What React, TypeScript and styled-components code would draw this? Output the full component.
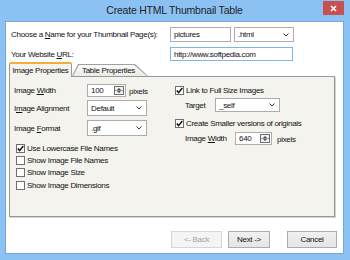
import React from "react";
import styled, { createGlobalStyle } from "styled-components";

const Global = createGlobalStyle`
  html, body { margin: 0; padding: 0; width: 350px; height: 260px; overflow: hidden; }
  body { font-family: "Liberation Sans", Arial, sans-serif; font-size: 8px; letter-spacing: -0.3px; color: #111; }
  * { box-sizing: border-box; }
`;

const Window = styled.div`
  width: 350px;
  height: 260px;
  background: #8bc1f3;
  display: grid;
  grid-template-rows: 21px 1fr;
  padding: 0 6px 6px 5px;
`;

const TitleBar = styled.div`
  display: grid;
  grid-template-columns: 1fr auto 1fr;
  align-items: center;
`;

const Title = styled.div`
  grid-column: 2;
  font-size: 10.5px;
  letter-spacing: -0.22px;
  color: #1f1f1f;
  line-height: 21px;
`;

const CloseButton = styled.div`
  grid-column: 3;
  justify-self: end;
  align-self: start;
  width: 21px;
  height: 14px;
  margin-top: 1px;
  background: #c75050;
  display: flex;
  align-items: center;
  justify-content: center;
`;

const Client = styled.div`
  background: #ffffff;
  border: 1px solid #74a8dc;
  display: flex;
  flex-direction: column;
  padding: 5px 8px 0 3px;
`;

const TopRow = styled.div<{ $h: number; $mt: number }>`
  display: flex;
  align-items: center;
  height: ${(p) => p.$h}px;
  margin-top: ${(p) => p.$mt}px;
  padding-left: 2px;
`;

const TopLabel = styled.div`
  width: 159px;
  flex: none;
`;

const TextInput = styled.div<{ $w: number; $focus?: boolean }>`
  width: ${(p) => p.$w}px;
  height: 100%;
  border: 1px solid ${(p) => (p.$focus ? "#7eb4ea" : "#abadb3")};
  background: #fff;
  display: flex;
  align-items: center;
  padding-left: 3px;
  flex: none;
`;

const SelectBox = styled.div<{ $w: number; $h?: number; $ml?: number }>`
  width: ${(p) => p.$w}px;
  height: ${(p) => (p.$h ? `${p.$h}px` : "100%")};
  margin-left: ${(p) => p.$ml ?? 0}px;
  border: 1px solid #acacac;
  background: #fff;
  display: flex;
  align-items: center;
  justify-content: space-between;
  padding: 0 4px 0 3px;
  flex: none;
`;

const TabStrip = styled.div`
  display: flex;
  align-items: flex-end;
  height: 14px;
  margin-top: 1px;
`;

const ActiveTab = styled.div`
  position: relative;
  z-index: 1;
  width: 63px;
  height: 15px;
  margin-bottom: -1px;
  background: #f4f3ee;
  border: 1px solid #919b9c;
  border-bottom: none;
  border-top: 2px solid #f0ae3c;
  border-radius: 2px 2px 0 0;
  display: flex;
  align-items: center;
  justify-content: center;
  padding-bottom: 1px;
`;

const TabOuter = styled.div`
  width: 76px;
  height: 12px;
  background: #9aa3a4;
  clip-path: polygon(0 100%, 6px 0, calc(100% - 13px) 0, 100% 100%);
  display: flex;
  padding: 1px 1px 0 1px;
`;

const TabInner = styled.div`
  flex: 1;
  background: linear-gradient(#fbfbfa, #ecebe6);
  clip-path: polygon(0 100%, 6px 0, calc(100% - 13px) 0, 100% 100%);
  display: flex;
  align-items: center;
  padding-left: 9px;
`;

const Panel = styled.div`
  height: 141px;
  background: #f4f3ee;
  border: 1px solid #919b9c;
  box-shadow: 1px 1px 0 #d4d3cf;
  display: grid;
  grid-template-columns: 159px 1fr;
  padding: 7px 4px;
`;

const Column = styled.div`
  display: flex;
  flex-direction: column;
`;

const FieldRow = styled.div<{ $h: number; $mt?: number; $indent?: number }>`
  display: flex;
  align-items: center;
  height: ${(p) => p.$h}px;
  margin-top: ${(p) => p.$mt ?? 0}px;
  padding-left: ${(p) => p.$indent ?? 0}px;
`;

const FieldLabel = styled.div<{ $w: number }>`
  width: ${(p) => p.$w}px;
  flex: none;
`;

const Unit = styled.div<{ $ml: number }>`
  margin-left: ${(p) => p.$ml}px;
  align-self: flex-end;
  line-height: 10px;
`;

const SpinBox = styled.div<{ $w: number }>`
  width: ${(p) => p.$w}px;
  height: 100%;
  border: 1px solid #abadb3;
  background: #fff;
  display: flex;
  align-items: center;
  justify-content: space-between;
  padding: 0 0 0 3px;
  flex: none;
`;

const SpinButtons = styled.div`
  width: 10px;
  height: calc(100% - 2px);
  margin-right: 1px;
  border: 1px solid #707070;
  background: #f0f0f0;
  display: flex;
`;

const CheckList = styled.div<{ $mt: number }>`
  display: flex;
  flex-direction: column;
  margin-top: ${(p) => p.$mt}px;
`;

const CheckRow = styled.div<{ $h?: number; $mt?: number }>`
  display: flex;
  align-items: center;
  gap: 2px;
  height: ${(p) => p.$h ?? 12.3}px;
  margin-top: ${(p) => p.$mt ?? 0}px;
  padding-left: 2px;
`;

const Box = styled.div`
  width: 9px;
  height: 9px;
  border: 1px solid #6f6f6f;
  background: #fff;
  display: flex;
  align-items: center;
  justify-content: center;
  flex: none;
`;

const ButtonRow = styled.div`
  display: flex;
  justify-content: flex-end;
  margin-top: 14px;
  margin-right: -2px;
`;

const Button = styled.div<{ $w: number; $ml: number; $disabled?: boolean }>`
  width: ${(p) => p.$w}px;
  height: 17px;
  margin-left: ${(p) => p.$ml}px;
  border: 1px solid ${(p) => (p.$disabled ? "#d6d6d6" : "#acacac")};
  background: ${(p) => (p.$disabled ? "#f4f4f4" : "linear-gradient(#f0f0f0, #e5e5e5)")};
  color: ${(p) => (p.$disabled ? "#a3a3a3" : "#111")};
  display: flex;
  align-items: center;
  justify-content: center;
`;

const U = styled.span`
  text-decoration: underline;
`;

const Chevron = () => (
  <svg width="6" height="4" viewBox="0 0 6 4">
    <polyline points="0.5,0.5 3,3 5.5,0.5" fill="none" stroke="#333" strokeWidth="1" />
  </svg>
);

const Check = () => (
  <svg width="7" height="7" viewBox="0 0 7 7">
    <polyline points="0.8,3.6 2.6,5.6 6.3,1" fill="none" stroke="#111" strokeWidth="1.5" />
  </svg>
);

const Spin = () => (
  <SpinButtons>
    <svg width="8" height="100%" viewBox="0 0 8 10" preserveAspectRatio="none">
      <polygon points="2,4 4,1.8 6,4" fill="#111" />
      <line x1="0" y1="5" x2="8" y2="5" stroke="#707070" strokeWidth="0.8" />
      <polygon points="2,6 4,8.2 6,6" fill="#111" />
    </svg>
  </SpinButtons>
);

const CheckItem = ({ checked, label, h, mt }: { checked?: boolean; label: React.ReactNode; h?: number; mt?: number }) => (
  <CheckRow $h={h} $mt={mt}>
    <Box>{checked ? <Check /> : null}</Box>
    <span>{label}</span>
  </CheckRow>
);

export default function App() {
  return (
    <>
      <Global />
      <Window>
        <TitleBar>
          <Title>Create HTML Thumbnail Table</Title>
          <CloseButton>
            <svg width="7" height="7" viewBox="0 0 7 7">
              <path d="M1 1 L6 6 M6 1 L1 6" stroke="#fff" strokeWidth="1.6" />
            </svg>
          </CloseButton>
        </TitleBar>
        <Client>
          <TopRow $h={15} $mt={0}>
            <TopLabel>
              Choose a <U>N</U>ame for your Thumbnail Page(s):
            </TopLabel>
            <TextInput $w={61}>pictures</TextInput>
            <SelectBox $w={60} $ml={3}>
              <span>.html</span>
              <Chevron />
            </SelectBox>
          </TopRow>
          <TopRow $h={14} $mt={5}>
            <TopLabel>
              Your Website <U>U</U>RL:
            </TopLabel>
            <TextInput $w={123} $focus>
              http://www.softpedia.com
            </TextInput>
          </TopRow>
          <TabStrip>
            <ActiveTab>Image Properties</ActiveTab>
            <TabOuter>
              <TabInner>Table Properties</TabInner>
            </TabOuter>
          </TabStrip>
          <Panel>
            <Column>
              <FieldRow $h={13}>
                <FieldLabel $w={73}>
                  Image <U>W</U>idth
                </FieldLabel>
                <SpinBox $w={39}>
                  <span>100</span>
                  <Spin />
                </SpinBox>
                <Unit $ml={3}>pixels</Unit>
              </FieldRow>
              <FieldRow $h={16} $mt={3}>
                <FieldLabel $w={73}>
                  I<U>m</U>age Alignment
                </FieldLabel>
                <SelectBox $w={60}>
                  <span>Default</span>
                  <Chevron />
                </SelectBox>
              </FieldRow>
              <FieldRow $h={16} $mt={4}>
                <FieldLabel $w={73}>
                  Image <U>F</U>ormat
                </FieldLabel>
                <SelectBox $w={60}>
                  <span>.gif</span>
                  <Chevron />
                </SelectBox>
              </FieldRow>
              <CheckList $mt={6}>
                <CheckItem checked label="Use Lowercase File Names" />
                <CheckItem label="Show Image File Names" />
                <CheckItem label="Show Image Size" />
                <CheckItem label="Show Image Dimensions" />
              </CheckList>
            </Column>
            <Column>
              <CheckItem checked h={12} label="Link to Full Size Images" />
              <FieldRow $h={14} $mt={2} $indent={12}>
                <FieldLabel $w={30}>Target</FieldLabel>
                <SelectBox $w={65}>
                  <span>_self</span>
                  <Chevron />
                </SelectBox>
              </FieldRow>
              <CheckItem checked h={12} mt={5} label="Create Smaller versions of originals" />
              <FieldRow $h={13} $mt={3} $indent={12}>
                <FieldLabel $w={50}>
                  Image <U>W</U>idth
                </FieldLabel>
                <SpinBox $w={37}>
                  <span>640</span>
                  <Spin />
                </SpinBox>
                <Unit $ml={5}>pixels</Unit>
              </FieldRow>
            </Column>
          </Panel>
          <ButtonRow>
            <Button $w={51} $ml={0} $disabled>
              &lt;- Back
            </Button>
            <Button $w={42} $ml={6}>
              Next -&gt;
            </Button>
            <Button $w={50} $ml={17}>
              Cancel
            </Button>
          </ButtonRow>
        </Client>
      </Window>
    </>
  );
}
